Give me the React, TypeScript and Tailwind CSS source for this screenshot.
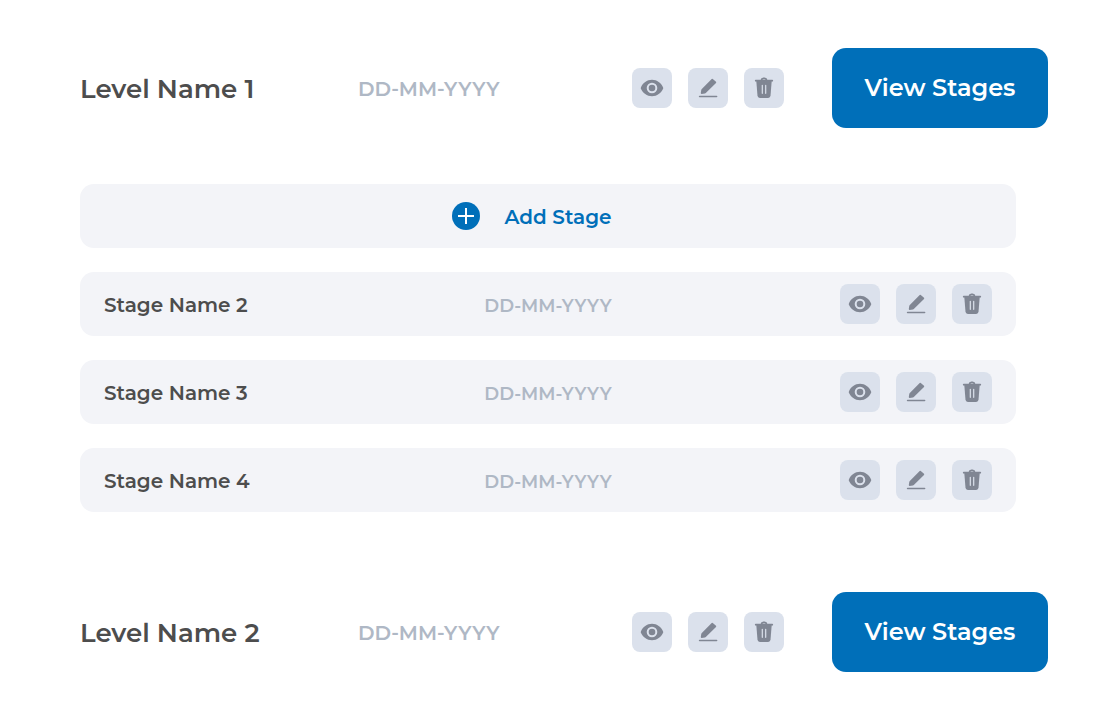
const STAGES = ["Stage Name 2", "Stage Name 3", "Stage Name 4"];

const LEVELS = [
  { name: "Level Name 1", date: "DD-MM-YYYY", stages: STAGES },
  { name: "Level Name 2", date: "DD-MM-YYYY", stages: [] as string[] },
];

const ICON_BUTTON =
  "flex h-10 w-10 items-center justify-center rounded-lg bg-[#dbe1ec] text-[#808693]";

function EyeIcon() {
  return (
    <svg viewBox="0 0 40 40" className="h-10 w-10" aria-hidden>
      <path
        fill="currentColor"
        d="M20 11.8c-5 0-9.2 3.2-11.1 7.6a1.6 1.6 0 0 0 0 1.3C10.8 25 15 28.2 20 28.2s9.2-3.2 11.1-7.5a1.6 1.6 0 0 0 0-1.3C29.2 15 25 11.8 20 11.8Z"
      />
      <circle cx="20" cy="20" r="4.3" fill="currentColor" stroke="#dbe1ec" strokeWidth="2" />
    </svg>
  );
}

function PencilIcon() {
  return (
    <svg viewBox="0 0 40 40" className="h-10 w-10" aria-hidden>
      <path
        fill="currentColor"
        d="M23.7 11 13.8 20.9a1.7 1.7 0 0 0-.5.9l-.5 3.3c-.1.5.3.9.8.8l3.3-.5c.4-.1.7-.3.9-.5l10.2-10a.8.8 0 0 0 0-1.1l-3.2-2.8a.8.8 0 0 0-1.1 0Z"
      />
      <path d="M11.6 28.5h17" stroke="currentColor" strokeWidth="1.6" strokeLinecap="round" />
    </svg>
  );
}

function TrashIcon() {
  return (
    <svg viewBox="0 0 40 40" className="h-10 w-10" aria-hidden>
      <path
        d="M17.4 12.7v-.5a2 2 0 0 1 2-1.800h1.2a2 2 0 0 1 2 1.800v.5M11.7 12.700h16.6"
        fill="none"
        stroke="currentColor"
        strokeWidth="1.7"
        strokeLinecap="round"
      />
      <path
        fill="currentColor"
        d="M12.3 13h15.4l-1.2 14.8a2.4 2.4 0 0 1-2.3 2.2h-8.4a2.4 2.4 0 0 1-2.3-2.2L12.3 13Z"
      />
      <path d="M18.3 17.3v8M21.7 17.3v8" stroke="#dbe1ec" strokeWidth="1.2" strokeLinecap="round" />
    </svg>
  );
}

function Actions({ name }: { name: string }) {
  return (
    <div className="flex gap-4">
      <button type="button" aria-label={`View ${name}`} className={ICON_BUTTON}>
        <EyeIcon />
      </button>
      <button type="button" aria-label={`Edit ${name}`} className={ICON_BUTTON}>
        <PencilIcon />
      </button>
      <button type="button" aria-label={`Delete ${name}`} className={ICON_BUTTON}>
        <TrashIcon />
      </button>
    </div>
  );
}

function StageRow({ name }: { name: string }) {
  return (
    <li className="grid h-16 grid-cols-[1fr_auto_1fr] items-center rounded-[14px] bg-[#f3f4f8] px-6">
      <h3 className="pt-0.5 text-[20px] font-semibold text-[#4d4d4d]">{name}</h3>
      <span className="pt-1 text-[18px] font-semibold text-[#afb8c5]">DD-MM-YYYY</span>
      <div className="justify-self-end">
        <Actions name={name} />
      </div>
    </li>
  );
}

function StageList({ stages }: { stages: string[] }) {
  return (
    <div className="mt-14 mr-8 space-y-6">
      <button
        type="button"
        className="flex h-16 w-full items-center justify-center gap-6 rounded-[14px] bg-[#f3f4f8] pr-8 text-[20px] font-semibold text-[#006fb9]"
      >
        <svg viewBox="0 0 28 28" className="h-7 w-7" aria-hidden>
          <circle cx="14" cy="14" r="14" fill="currentColor" />
          <path d="M14 6v16M6 14h16" stroke="#fff" strokeWidth="2" />
        </svg>
        <span className="pt-0.5">Add Stage</span>
      </button>
      <ul className="space-y-6">
        {stages.map((stage) => (
          <StageRow key={stage} name={stage} />
        ))}
      </ul>
    </div>
  );
}

export default function App() {
  return (
    <main className="space-y-20 bg-white py-12 pr-12 pl-20 font-['Montserrat','Inter',sans-serif]">
      {LEVELS.map((level) => (
        <section key={level.name}>
          <div className="grid grid-cols-[1fr_1fr_auto_auto] items-center">
            <h2 className="pt-0.5 text-[26px] font-semibold text-[#4d4d4d]">{level.name}</h2>
            <span className="pt-0.5 pl-0.5 text-[20px] font-semibold text-[#afb8c5]">{level.date}</span>
            <Actions name={level.name} />
            <button
              type="button"
              className="ml-12 h-20 min-w-54 rounded-[14px] bg-[#006fb9] px-8 text-[24px] font-semibold text-white"
            >
              View Stages
            </button>
          </div>
          {level.stages.length > 0 ? <StageList stages={level.stages} /> : null}
        </section>
      ))}
    </main>
  );
}
